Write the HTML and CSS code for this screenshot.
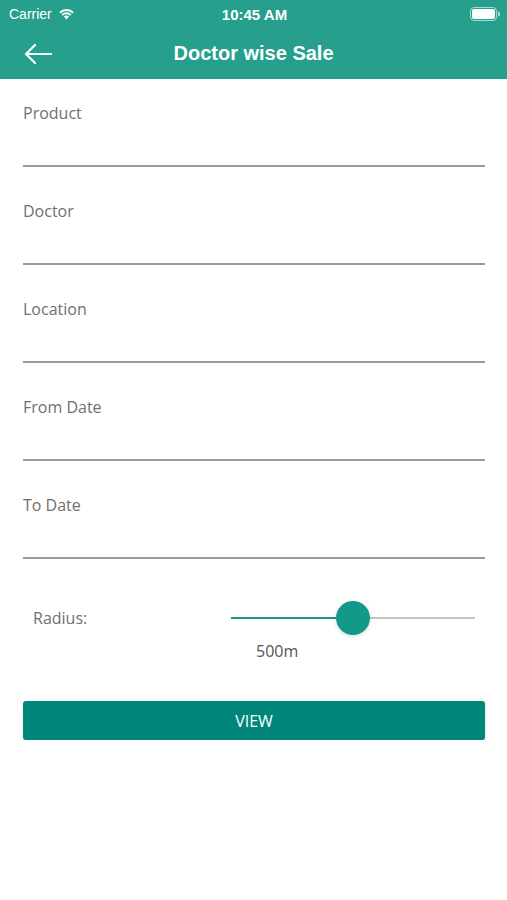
FILE: index.html
```html
<!DOCTYPE html>
<html lang="en">
<head>
  <meta charset="UTF-8" />
  <meta name="viewport" content="width=device-width, initial-scale=1.0"/>
  <title>Doctor wise Sale</title>
  <link rel="stylesheet" href="styles.css">
</head>
<body>
  <header class="top">
    <div class="status">
      <div class="status-left">
        <span>Carrier</span>
        <svg class="wifi" width="17" height="12" viewBox="0 0 17 12">
          <path d="M8.5 11.5 L5.9 8.6 A3.8 3.8 0 0 1 11.1 8.6 Z" fill="#fff"/>
          <path d="M3.6 6.3 A7 7 0 0 1 13.4 6.3 L12.1 7.7 A5.2 5.2 0 0 0 4.9 7.7 Z" fill="#fff"/>
          <path d="M1.3 4 A10.3 10.3 0 0 1 15.7 4 L14.4 5.4 A8.4 8.4 0 0 0 2.6 5.4 Z" fill="#fff"/>
        </svg>
      </div>
      <span class="time">10:45 AM</span>
      <div class="status-right">
        <svg width="30" height="14" viewBox="0 0 30 14">
          <rect x="0.5" y="0.5" width="26" height="13" rx="3.5" fill="none" stroke="#fff" stroke-opacity="0.6"/>
          <rect x="2" y="2" width="23" height="10" rx="2" fill="#fff"/>
          <path d="M28 4.5 a2 2 0 0 1 0 5 z" fill="#fff" fill-opacity="0.6"/>
        </svg>
      </div>
    </div>
    <nav class="navbar">
      <button class="back" aria-label="Back">
        <svg width="28" height="20" viewBox="0 0 28 20">
          <path d="M27 10 H2 M11 1 L2 10 L11 19" fill="none" stroke="#fff" stroke-width="2.2" stroke-linecap="round" stroke-linejoin="round"/>
        </svg>
      </button>
      <h1>Doctor wise Sale</h1>
    </nav>
  </header>

  <main class="form">
    <div class="field"><label>Product</label></div>
    <div class="field"><label>Doctor</label></div>
    <div class="field"><label>Location</label></div>
    <div class="field"><label>From Date</label></div>
    <div class="field"><label>To Date</label></div>

    <div class="radius">
      <span class="radius-label">Radius:</span>
      <div class="slider">
        <div class="track-fill"></div>
        <div class="thumb"></div>
      </div>
    </div>
    <div class="radius-value">500m</div>

    <button class="view-btn">VIEW</button>
  </main>
</body>
</html>
```

FILE: styles.css
```css
body {
  margin: 0;
  background: #fff;
  font-family: "Open Sans", sans-serif;
}
.top {
  background: #26a08c;
  color: #fff;
  height: 79px;
}
.status {
  height: 28px;
  display: flex;
  align-items: center;
  justify-content: space-between;
  padding: 0 7px 0 9px;
  font-family: "Liberation Sans", Arial, sans-serif;
  font-size: 14px;
}
.status-left {
  display: flex;
  align-items: center;
  gap: 6px;
  width: 110px;
}
.status-right {
  width: 110px;
  display: flex;
  justify-content: flex-end;
}
.time {
  font-weight: bold;
  font-size: 15px;
}
.navbar {
  height: 51px;
  display: flex;
  align-items: center;
  position: relative;
}
.back {
  background: none;
  border: none;
  padding: 0;
  margin-left: 24px;
  display: flex;
}
.navbar h1 {
  position: absolute;
  left: 0;
  right: 0;
  text-align: center;
  margin: 0;
  font-family: "Liberation Sans", Arial, sans-serif;
  font-size: 20px;
  font-weight: bold;
  pointer-events: none;
}
.form {
  padding: 23px 22px 0 23px;
}
.field {
  height: 63px;
  border-bottom: 2px solid #9a9a9a;
  margin-bottom: 33px;
}
.field label {
  display: block;
  font-size: 16px;
  line-height: 22px;
  color: #707070;
}
.radius {
  display: flex;
  align-items: center;
  margin-top: 41px;
  height: 36px;
}
.radius-label {
  width: 198px;
  padding-left: 10px;
  font-size: 16px;
  color: #707070;
}
.slider {
  position: relative;
  flex: 1;
  height: 2px;
  margin-right: 10px;
  background: #c4c4c4;
}
.track-fill {
  width: 122px;
  height: 2px;
  background: #13998a;
}
.thumb {
  position: absolute;
  left: 105px;
  top: -16px;
  width: 34px;
  height: 34px;
  border-radius: 50%;
  background: #13998a;
  box-shadow: 0 1px 4px rgba(0,0,0,0.15);
}
.radius-value {
  margin-left: 233px;
  margin-top: 4px;
  font-size: 16px;
  color: #555;
}
.view-btn {
  display: block;
  width: 100%;
  margin-top: 39px;
  height: 39px;
  background: #00877a;
  color: #fff;
  border: none;
  border-radius: 3px;
  font-family: "Open Sans", sans-serif;
  font-size: 16px;
  box-shadow: 0 1px 2px rgba(0,0,0,0.2);
}
```
